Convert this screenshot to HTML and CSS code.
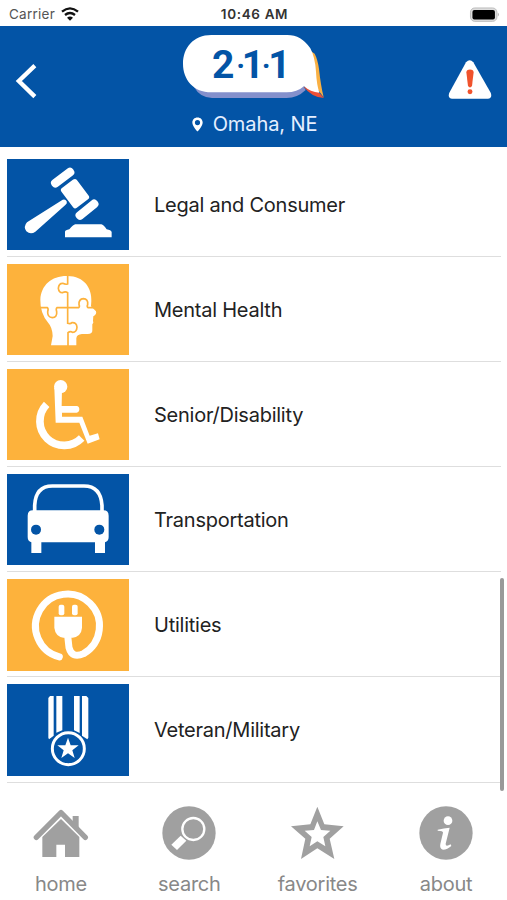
FILE: index.html
```html
<!DOCTYPE html>
<html lang="en">
<head>
<meta charset="utf-8">
<title>2-1-1 Omaha</title>
<link rel="stylesheet" href="styles.css">
</head>
<body>
<div class="status">
  <div class="carrier"><span>Carrier</span>
    <svg class="wifi" viewBox="186 17 54 42"><g fill="none" stroke="#111" stroke-width="7"><path d="M189 31Q213 11 237 31"/><path d="M198 41Q213 29 228 41"/></g><path d="M204 49Q213 42 222 49L213 58Z" fill="#111"/></svg>
  </div>
  <div class="time">10:46 AM</div>
  <div class="power"><svg class="battery" viewBox="648 16 92 46"><rect x="651" y="19" width="81" height="41" rx="13" fill="#ddd" stroke="#bbb" stroke-width="3"/><rect x="657" y="25" width="69" height="29" rx="6"/><path d="M735 34q6 5 0 11z" fill="#aaa"/></svg></div>
</div>
<header class="header">
  <svg class="back" viewBox="45 188 68 108"><path d="M104 196L56 242L104 289" fill="none" stroke="#fff" stroke-width="13"/></svg>
  <div class="brand">
    <svg class="logo" viewBox="0 0 510 240">
      <path d="M72 186Q90 218 126 219H350Q382 219 407 195L395 175Z" fill="#8490cc"/>
      <path d="M422 78L434 86Q443 103 447 132Q452 180 461 217L440 190Z" fill="#f9b043"/>
      <path d="M400 184L446 202L462 219Q426 219 400 184Z" fill="#ee5036"/>
      <path d="M124 30H352Q394 30 421 70Q435 96 438 140Q440 179 448 203Q421 201 402 184Q381 202 350 202H124C70 202 39 163 39 116S70 30 124 30Z" fill="#fff"/>
      <text class="logo-text" y="159"><tspan x="126">2</tspan><tspan class="dot" x="199" dy="-5">·</tspan><tspan x="215" dy="5">1</tspan><tspan class="dot" x="275" dy="-5">·</tspan><tspan x="295" dy="5">1</tspan></text>
    </svg>
    <div class="place"><svg class="pin" viewBox="575 347 34 46"><path fill="#fff" fill-rule="evenodd" d="M592 348C582 348 576 355 576 364C576 376 592 392 592 392S608 376 608 364C608 355 602 348 592 348ZM592 356A8 8 0 1 1 592 372A8 8 0 1 1 592 356Z"/></svg><span>Omaha, NE</span></div>
  </div>
  <svg class="alert" viewBox="583 181 132 118"><path d="M637 188Q648 176 659 188L712 281Q717 297 703 298H595Q581 297 586 281Z" fill="#fff"/><path d="M638 219Q638 210 649 210T660 219L655 260Q649 268 643 260Z" fill="#f0532d"/><circle cx="649" cy="277" r="7.500" fill="#f0532d"/></svg>
</header>
<main class="list">
  <div class="row"><svg class="tile blue" viewBox="21 26 366 274">
    <g fill="#fff"><rect x="-40" y="-13" width="80" height="26" rx="12" transform="translate(188 82) rotate(-37)"/><rect x="-29" y="-37" width="58" height="74" rx="8" transform="translate(225 130) rotate(-37)"/><rect x="-40" y="-13" width="80" height="26" rx="12" transform="translate(261 178) rotate(-39)"/><path d="M188 148Q196 145 200 153Q203 159 196 164L106 244Q92 254 79 243Q69 229 81 216Z"/><path d="M195 261V244Q196 239 208 237Q219 223 226 222H304Q311 223 320 237Q333 239 335 245V261Z"/></g></svg><span>Legal and Consumer</span></div>
  <div class="row"><svg class="tile gold" viewBox="21 26 366 274">
    <path fill="#fff" d="M200 62C253 61 276 99 274 138L273 153L288 168Q291 177 280 183L279 196Q282 202 277 207V225Q278 236 263 236H246Q230 237 229 249V270H153L158 242Q157 216 145 203Q120 174 121 133C123 90 154 62 200 62Z"/>
    <g fill="none" stroke="#fdb23c" stroke-width="5"><path d="M203 60V86Q196 88 188 84Q176 84 175 99Q177 113 188 112Q196 107 203 112V204Q211 207 216 202Q230 201 231 216Q230 231 218 231Q211 226 204 232V272"/><path d="M120 157H142Q146 160 143 169Q142 186 157 187Q172 186 170 169Q167 160 171 157H236Q240 154 237 148Q236 131 250 130Q265 131 263 148Q260 154 264 157H282"/></g></svg><span>Mental Health</span></div>
  <div class="row"><svg class="tile gold" viewBox="21 26 366 274">
    <circle cx="182" cy="79" r="20" fill="#fff"/><path fill="#fff" d="M163 83H186L185 137H230Q238 138 238 147T230 157H186V169H247L269 226L294 219L299 237L263 250L238 187H167Z"/><path d="M140 132A68 68 0 1 0 245 233" fill="none" stroke="#fff" stroke-width="23"/></svg><span>Senior/Disability</span></div>
  <div class="row"><svg class="tile blue" viewBox="21 26 366 274">
    <path d="M104 140V120Q107 62 157 62H252Q302 62 306 120V140" fill="none" stroke="#fff" stroke-width="11"/><path fill="#fff" d="M99 135H310Q326 135 326 151V215Q326 228 315 231V263H285V231H124V263H94V231Q83 228 83 215V151Q83 135 99 135Z"/><g fill="#0354a6"><circle cx="108" cy="193" r="15"/><circle cx="298" cy="193" r="15"/></g></svg><span>Transportation</span></div>
  <div class="row"><svg class="tile gold" viewBox="21 26 366 274">
    <path d="M178 260A96 96 0 1 1 251 250Q216 266 207 232L203 196" fill="none" stroke="#fff" stroke-width="21" stroke-linecap="round"/><g fill="#fff"><rect x="176" y="103" width="17" height="32" rx="6"/><rect x="216" y="103" width="17" height="32" rx="6"/><path d="M163 139H246V172Q244 198 218 202H190Q166 198 163 172Z"/></g></svg><span>Utilities</span></div>
  <div class="row"><svg class="tile blue" viewBox="21 26 366 274">
    <g fill="#fff"><path d="M145 68L150 62H161V181L147 192L145 187ZM169 62H187V165L169 172ZM222 62H239V173L222 165ZM246 62H259L265 68V187L262 192L246 181Z"/><path d="M204 187L212 210H236L217 225L224 248L204 234L184 248L191 225L172 210H196Z"/></g><circle cx="205" cy="220" r="48" fill="none" stroke="#fff" stroke-width="9"/></svg><span>Veteran/Military</span></div>
  <div class="scrollbar"></div>
</main>
<nav class="tabs">
  <div class="tab"><svg viewBox="99 75 168 168"><path d="M109 172L183 98L256 172" fill="none" stroke="#a0a0a0" stroke-width="16" stroke-linecap="round" stroke-linejoin="round"/><path fill="#a0a0a0" d="M218 108H236V149L218 131ZM183 117L238 171V231H195V194H169V231H127V171Z"/></svg><span>home</span></div>
  <div class="tab"><svg viewBox="482 74 168 168"><circle cx="566" cy="158" r="80" fill="#a0a0a0"/><circle cx="579" cy="146" r="33" fill="none" stroke="#fff" stroke-width="7"/><path d="M541 166L558 181L530 209L513 193Z" fill="#fff"/></svg><span>search</span></div>
  <div class="tab"><svg viewBox="107 75 168 168"><path fill="#a0a0a0" fill-rule="evenodd" d="M189 80L210 133L268 139L226 176L240 237L189 205L140 237L153 176L110 139L168 133ZM189 124L179 150L151 152L172 171L166 199L189 184L213 199L207 171L228 152L200 150Z"/></svg><span>favorites</span></div>
  <div class="tab"><svg viewBox="492 74 168 168"><circle cx="576" cy="158" r="80" fill="#a0a0a0"/><circle cx="582" cy="121" r="13" fill="#fff"/><path fill="#fff" d="M551 148Q570 143 587 142L575 190Q574 201 590 192L592 197Q580 208 567 208Q556 205 559 191L567 157Q568 151 551 151Z"/></svg><span>about</span></div>
</nav>
</body>
</html>
```
FILE: styles.css
```css
* { box-sizing: border-box; }
body { margin: 0; width: 507px; height: 900px; overflow: hidden; background: #fff; color: #222; font-family: Inter, "Liberation Sans", sans-serif; display: flex; flex-direction: column; }
svg { display: block; flex: none; }
.status { height: 26px; display: grid; grid-template-columns: 1fr auto 1fr; align-items: center; padding: 1px 7px 0 9px; font-size: 13.5px; line-height: 26px; }
.carrier { display: flex; align-items: center; gap: 6px; color: #555; letter-spacing: .25px; }
.wifi { width: 18px; height: 14px; }
.time { font-weight: 600; font-size: 13.5px; color: #333; letter-spacing: .65px; }
.power { display: flex; justify-content: flex-end; }
.battery { width: 31px; height: 15px; }
.header { height: 121px; flex: none; background: #0354a6; display: grid; grid-template-columns: 1fr 170px 1fr; }
.back { width: 23px; height: 36px; margin: 37px 0 0 15px; }
.brand { display: flex; flex-direction: column; align-items: center; margin-left: 1px; width: 170px; }
.logo { width: 170px; height: 80px; margin-top: -1px; }
.logo-text { font: 700 117px Roboto, sans-serif; fill: #0354a6; }
.logo-text .dot { font-size: 88px; }
.place { display: flex; align-items: center; gap: 10px; margin-top: 6px; height: 26px; color: #e5efff; font-size: 20px; letter-spacing: -.1px; white-space: nowrap; }
.pin { width: 11px; height: 15px; }
.alert { width: 44px; height: 39px; margin: 34px 15px 0 0; justify-self: end; }
.list { position: relative; height: 643px; flex: none; padding: 5px 6px 0 7px; }
.row { height: 105.1px; padding-top: 1px; border-bottom: 1.500px solid #dedede; display: flex; align-items: center; gap: 25px; font-size: 20px; letter-spacing: -.24px; }
.tile { width: 122px; height: 91.300px; }
.blue { background: #0354a6; }
.gold { background: #fdb23c; }
.scrollbar { position: absolute; right: 3px; bottom: -1px; width: 4px; height: 213px; border-radius: 2px; background: #999; }
.tabs { height: 110px; display: flex; justify-content: space-between; padding: 15px 33px 0; }
.tab { width: 56px; display: flex; flex-direction: column; align-items: center; color: #888; font-size: 20px; line-height: 24px; letter-spacing: -.25px; }
.tab svg { width: 56px; height: 56px; }
.tab span { margin-top: 11px; white-space: nowrap; }
```
